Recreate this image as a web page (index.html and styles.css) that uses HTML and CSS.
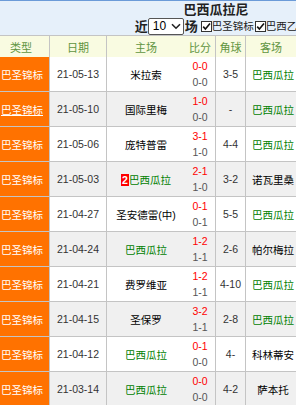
FILE: index.html
```html
<!DOCTYPE html>
<html lang="zh">
<head>
<meta charset="utf-8">
<title>巴西瓜拉尼</title>
<link rel="stylesheet" href="styles.css">
</head>
<body>
<div class="top-wrap">
<div class="top">
  <div class="title">巴西瓜拉尼</div>
  <div class="filter">
    <span class="big">近</span>
    <span class="select"><span class="sel-val">10</span><svg class="chev" width="10" height="7" viewBox="0 0 10 7"><path d="M1 1.2 L5 5.2 L9 1.2" fill="none" stroke="#222" stroke-width="1.6"/></svg></span>
    <span class="big">场</span>
    <span class="cb"><svg width="11" height="11" viewBox="0 0 11 11"><rect x="0.5" y="0.5" width="10" height="10" fill="#fff" stroke="#333"/><path d="M2.2 5.6 L4.4 8 L9 2.6" fill="none" stroke="#111" stroke-width="1.6"/></svg></span><span class="cbl">巴圣锦标</span><span class="cb"><svg width="11" height="11" viewBox="0 0 11 11"><rect x="0.5" y="0.5" width="10" height="10" fill="#fff" stroke="#333"/><path d="M2.2 5.6 L4.4 8 L9 2.6" fill="none" stroke="#111" stroke-width="1.6"/></svg></span><span class="cbl">巴西乙</span>
  </div>
</div>
</div>
<table class="tbl">
  <thead>
    <tr>
      <th class="c-type">类型</th>
      <th class="c-date">日期</th>
      <th class="c-home">主场</th>
      <th class="c-score">比分</th>
      <th class="c-corner">角球</th>
      <th class="c-away">客场</th>
    </tr>
  </thead>
  <tbody>
    <tr>
      <td class="c-type">巴圣锦标</td><td class="c-date">21-05-13</td><td class="c-home">米拉索</td>
      <td class="c-score"><div class="ft">0-0</div><div class="ht">0-0</div></td><td class="c-corner">3-5</td><td class="c-away green">巴西瓜拉</td>
    </tr>
    <tr class="alt">
      <td class="c-type"><span class="ul">巴圣锦标</span></td><td class="c-date">21-05-10</td><td class="c-home">国际里梅</td>
      <td class="c-score"><div class="ft">1-0</div><div class="ht">0-0</div></td><td class="c-corner">-</td><td class="c-away green">巴西瓜拉</td>
    </tr>
    <tr>
      <td class="c-type">巴圣锦标</td><td class="c-date">21-05-06</td><td class="c-home">庞特普雷</td>
      <td class="c-score"><div class="ft">3-1</div><div class="ht">1-0</div></td><td class="c-corner">4-4</td><td class="c-away green">巴西瓜拉</td>
    </tr>
    <tr class="alt">
      <td class="c-type">巴圣锦标</td><td class="c-date">21-05-03</td><td class="c-home green"><span class="rank">2</span>巴西瓜拉</td>
      <td class="c-score"><div class="ft">2-1</div><div class="ht">1-0</div></td><td class="c-corner">3-2</td><td class="c-away">诺瓦里桑</td>
    </tr>
    <tr>
      <td class="c-type">巴圣锦标</td><td class="c-date">21-04-27</td><td class="c-home">圣安德雷(中)</td>
      <td class="c-score"><div class="ft">0-1</div><div class="ht">0-1</div></td><td class="c-corner">5-5</td><td class="c-away green">巴西瓜拉</td>
    </tr>
    <tr class="alt">
      <td class="c-type">巴圣锦标</td><td class="c-date">21-04-24</td><td class="c-home green">巴西瓜拉</td>
      <td class="c-score"><div class="ft">1-2</div><div class="ht">1-1</div></td><td class="c-corner">2-6</td><td class="c-away">帕尔梅拉</td>
    </tr>
    <tr>
      <td class="c-type">巴圣锦标</td><td class="c-date">21-04-21</td><td class="c-home">费罗维亚</td>
      <td class="c-score"><div class="ft">1-2</div><div class="ht">1-1</div></td><td class="c-corner">4-10</td><td class="c-away green">巴西瓜拉</td>
    </tr>
    <tr class="alt">
      <td class="c-type">巴圣锦标</td><td class="c-date">21-04-15</td><td class="c-home">圣保罗</td>
      <td class="c-score"><div class="ft">3-2</div><div class="ht">1-1</div></td><td class="c-corner">2-8</td><td class="c-away green">巴西瓜拉</td>
    </tr>
    <tr>
      <td class="c-type">巴圣锦标</td><td class="c-date">21-04-12</td><td class="c-home green">巴西瓜拉</td>
      <td class="c-score"><div class="ft">0-1</div><div class="ht">0-0</div></td><td class="c-corner">4-</td><td class="c-away">科林蒂安</td>
    </tr>
    <tr class="alt">
      <td class="c-type">巴圣锦标</td><td class="c-date">21-03-14</td><td class="c-home green">巴西瓜拉</td>
      <td class="c-score"><div class="ft">0-0</div><div class="ht">0-0</div></td><td class="c-corner">4-2</td><td class="c-away">萨本托</td>
    </tr>
  </tbody>
</table>
</body>
</html>
```

FILE: styles.css
```css
html, body {
  margin: 0;
  padding: 0;
  background: #fff;
  overflow: hidden;
}
body {
  width: 296px;
  font-family: "Liberation Sans", "Noto Sans CJK SC", sans-serif;
  font-size: 10.5px;
  color: #000;
}
.top-wrap {
  width: 296px;
  overflow: hidden;
  border-top: 1px solid #6b9bd8;
  background: #e6f0fa;
}
.top {
  width: 432px;
  height: 34px;
  display: flex;
  flex-direction: column;
  align-items: center;
}
.title {
  margin-top: 1px;
  height: 16px;
  line-height: 16px;
  font-size: 13px;
  font-weight: bold;
  color: #222;
}
.filter {
  height: 17px;
  display: flex;
  align-items: center;
  white-space: nowrap;
}
.big {
  font-size: 13px;
  font-weight: bold;
  color: #222;
  line-height: 17px;
}
.select {
  box-sizing: border-box;
  width: 36px;
  height: 17px;
  border: 1px solid #555;
  border-radius: 2px;
  background: #fff;
  display: flex;
  align-items: center;
  padding-left: 4px;
  margin: 0 1px 0 0;
  font-size: 12px;
}
.sel-val {
  line-height: 15px;
}
.chev {
  margin-left: 5px;
}
.cb {
  display: flex;
  width: 11px;
  height: 11px;
  margin-left: 1px;
}
.big + .cb {
  margin-left: 3px;
}
.cbl {
  line-height: 17px;
  color: #222;
}
.tbl {
  table-layout: fixed;
  border-collapse: separate;
  border-spacing: 0;
  width: 296px;
  border-top: 1px solid #c4c4c4;
}
.tbl th, .tbl td {
  padding: 0;
  box-sizing: border-box;
  border-right: 1px solid #c4c4c4;
  text-align: center;
  white-space: nowrap;
  overflow: hidden;
}
.tbl th {
  height: 21px;
  background: #f9fbe1;
  color: #5f9440;
  font-weight: normal;
  font-size: 11px;
  font-family: "Noto Sans CJK SC", sans-serif;
}
.tbl td {
  height: 35px;
  border-bottom: 1px solid #c4c4c4;
  vertical-align: middle;
}
.tbl th.c-type {
  text-align: left;
  padding-left: 10px;
}
.c-type { width: 50px; }
.c-date { width: 57px; }
.c-home { width: 78px; }
.c-score { width: 31px; }
.c-corner { width: 30px; }
.c-away { width: 50px; }
.tbl .c-home { border-right: none; }
.tbl .c-away { border-right: none; }
.tbl td.c-type {
  background: #ff7200;
  color: #fff;
  text-align: left;
  padding-left: 1px;
}
.ul { text-decoration: underline; }
tr.alt td { background: #f0f0f0; }
tr.alt td.c-type { background: #ff7200; }
.tbl td.c-date { color: #333; }
.tbl td.c-corner { color: #333; }
.tbl td.c-away {
  text-align: center;
  padding-left: 6px;
  padding-right: 2px;
}
.green, .tbl td.green { color: #008000; }
.ft, .ht {
  line-height: 16px;
}
.ft { color: #ff0000; }
.ht { color: #555; }
.rank {
  display: inline-block;
  background: #f00;
  color: #fff;
  font-weight: bold;
  width: 8px;
  line-height: 12px;
  text-align: center;
  vertical-align: 0;
}
```
